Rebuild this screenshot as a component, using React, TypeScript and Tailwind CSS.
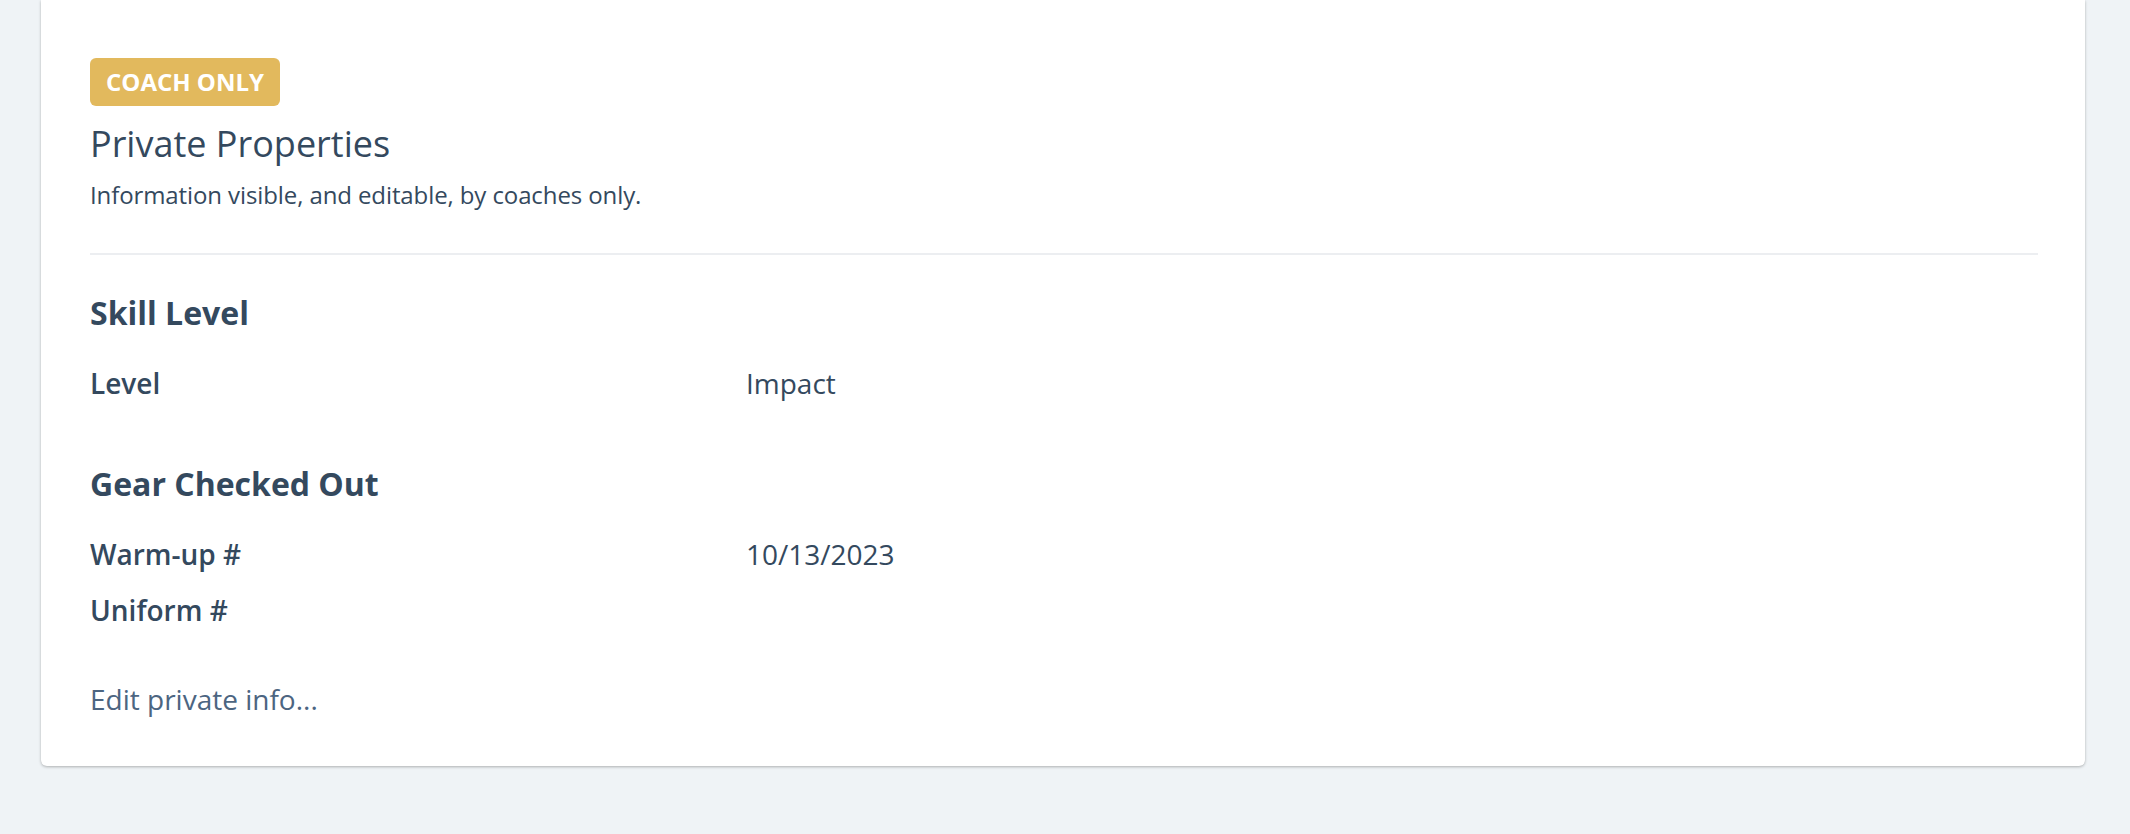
const sections = [
  {
    title: 'Skill Level',
    rows: [{ label: 'Level', value: 'Impact' }],
  },
  {
    title: 'Gear Checked Out',
    rows: [
      { label: 'Warm-up #', value: '10/13/2023' },
      { label: 'Uniform #', value: '' },
    ],
  },
];

export default function App() {
  return (
    <div className="min-h-[834px] bg-[#eff3f6] pl-[41px] pr-[45px] pb-[70px] font-['Open_Sans',sans-serif] text-[#34495e]">
      <div className="bg-white rounded-b-md shadow-[0_1px_3px_rgba(0,0,0,0.28)] pt-[58px] pb-[47px] pl-[49px] pr-[47px]">
        {/* Header */}
        <div className="flex">
          <span className="h-[48px] flex items-center px-4 rounded-md bg-[#e2b95d] text-white text-[24px] font-bold leading-none">
            COACH ONLY
          </span>
        </div>
        <h2 className="mt-[14px] text-[36px] leading-[48px] font-normal">Private Properties</h2>
        <p className="mt-[11px] text-[24px] leading-[32px] tracking-[-0.1px]">
          Information visible, and editable, by coaches only.
        </p>
        <div className="mt-[42px] h-[2px] bg-[#eceef1]" />

        {/* Sections */}
        <div className="mt-[38px] flex flex-col gap-[61px]">
          {sections.map(s => (
            <div key={s.title}>
              <h3 className="text-[32px] leading-[40px] font-bold">{s.title}</h3>
              <div className="mt-[30px] flex flex-col gap-4">
                {s.rows.map(r => (
                  <div key={r.label} className="grid grid-cols-[656px_1fr] text-[28px] leading-[40px]">
                    <span className="font-semibold">{r.label}</span>
                    <span>{r.value}</span>
                  </div>
                ))}
              </div>
            </div>
          ))}
        </div>

        <a href="#" className="block mt-[49px] text-[28px] leading-[40px] text-[#4c6581]">
          Edit private info...
        </a>
      </div>
    </div>
  );
}
